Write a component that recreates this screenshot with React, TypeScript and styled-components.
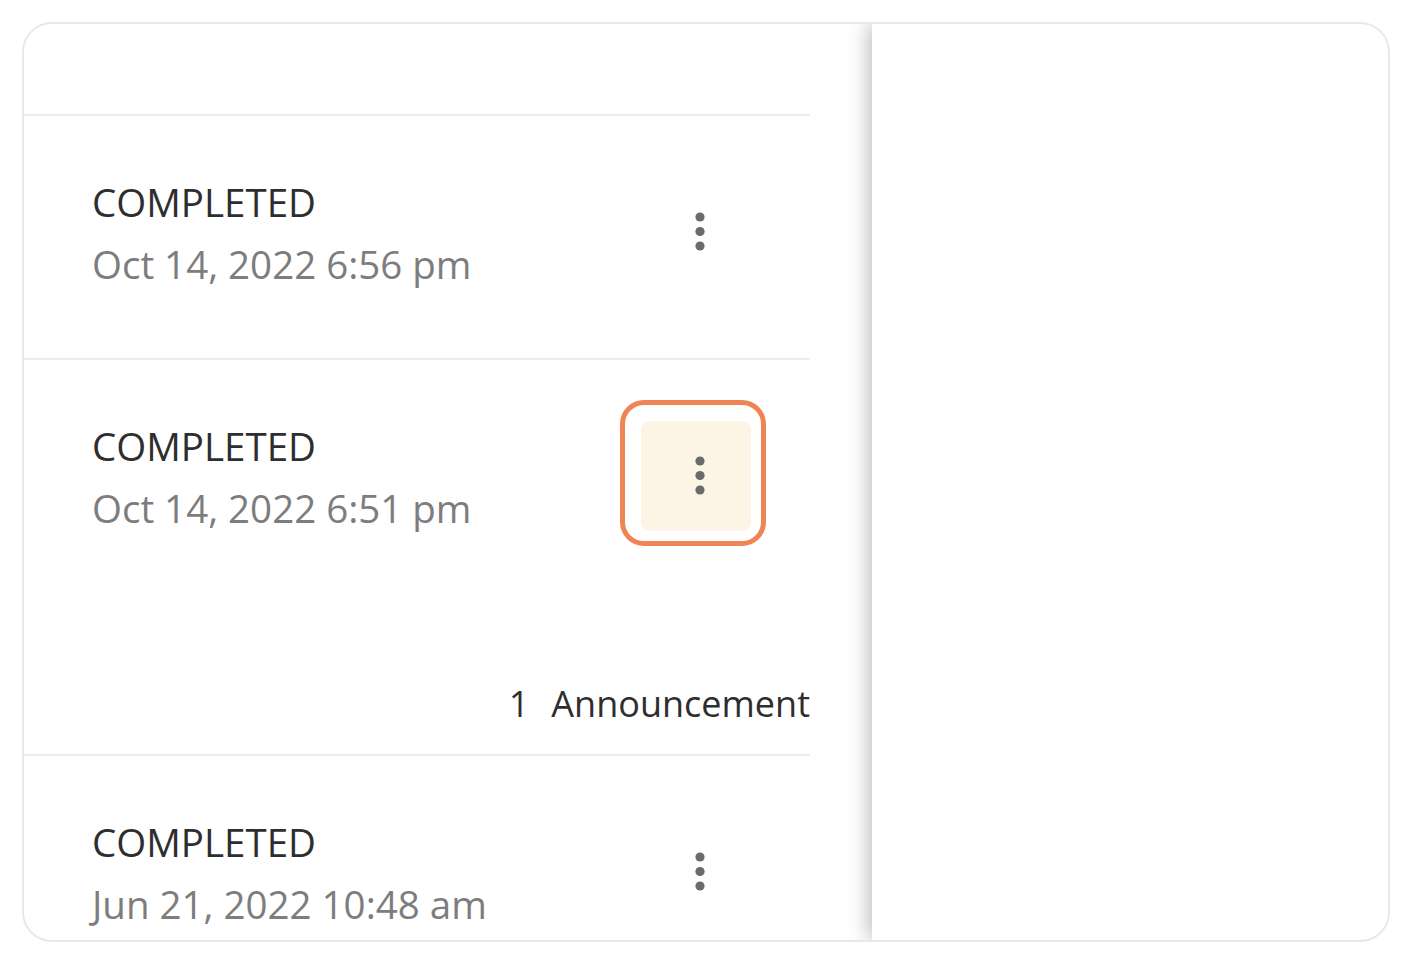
import React from "react";
import styled, { createGlobalStyle } from "styled-components";

type Session = {
  id: string;
  status: string;
  date: string;
  announcements?: number;
  focused?: boolean;
};

const sessions: Session[] = [
  { id: "a", status: "COMPLETED", date: "Oct 14, 2022 6:56 pm" },
  { id: "b", status: "COMPLETED", date: "Oct 14, 2022 6:51 pm", announcements: 1, focused: true },
  { id: "c", status: "COMPLETED", date: "Jun 21, 2022 10:48 am" },
];

const GlobalStyle = createGlobalStyle`
  html, body {
    margin: 0;
    padding: 0;
    background: #ffffff;
    font-family: "Open Sans", "Noto Sans", sans-serif;
  }
`;

const Page = styled.div`
  padding: 22px 22px 14px 22px;
  box-sizing: border-box;
  width: 1412px;
  height: 956px;
`;

const Card = styled.div`
  width: 1368px;
  height: 920px;
  box-sizing: border-box;
  border: 2px solid #e8e8ea;
  border-radius: 30px;
  overflow: hidden;
  display: flex;
  background: #fff;
`;

const ListPane = styled.div`
  width: 848px;
  flex-shrink: 0;
  padding-right: 62px;
  box-sizing: border-box;
  display: flex;
  flex-direction: column;
`;

const Header = styled.div`
  height: 90px;
  flex-shrink: 0;
  border-bottom: 2px solid #ededee;
`;

const Row = styled.div`
  border-bottom: 2px solid #ededee;
  padding: 55px 0 0 68px;
  flex-shrink: 0;
`;

const RowMain = styled.div<{ $bottom: number }>`
  display: flex;
  align-items: center;
  justify-content: space-between;
  padding-bottom: ${({ $bottom }) => $bottom}px;
`;

const TextBlock = styled.div`
  display: flex;
  flex-direction: column;
`;

const Status = styled.div`
  font-size: 38.5px;
  line-height: 62px;
  color: #2e2e2e;
`;

const DateText = styled.div`
  font-size: 38.5px;
  line-height: 62px;
  color: #7d7d7d;
`;

const MenuButton = styled.button<{ $focused?: boolean }>`
  position: relative;
  width: 110px;
  height: 110px;
  margin-right: 59px;
  margin-top: -3px;
  border: none;
  border-radius: 9px;
  background: ${({ $focused }) => ($focused ? "#fcf4e5" : "transparent")};
  display: flex;
  align-items: center;
  justify-content: center;
  padding: 0 0 0 7px;
  cursor: pointer;

  &::after {
    content: "";
    display: ${({ $focused }) => ($focused ? "block" : "none")};
    position: absolute;
    inset: -21px -15px -15px -21px;
    border: 5px solid #ef8555;
    border-radius: 24px;
  }
`;

const Footer = styled.div`
  display: flex;
  justify-content: flex-end;
  font-size: 36px;
  line-height: 62px;
  color: #2e2e2e;
  padding-bottom: 19px;
  gap: 22px;
`;

const DetailPane = styled.div`
  flex: 1;
  background: #fff;
  box-shadow: -3px 0 20px rgba(0, 0, 0, 0.28);
  position: relative;
`;

const Kebab = () => (
  <svg width="12" height="42" viewBox="0 0 12 42">
    <circle cx="6" cy="6" r="4.6" fill="#6b6b6b" />
    <circle cx="6" cy="20.5" r="4.6" fill="#6b6b6b" />
    <circle cx="6" cy="35" r="4.6" fill="#6b6b6b" />
  </svg>
);

const SessionRow = ({ status, date, announcements, focused }: Session) => (
  <Row>
    <RowMain $bottom={announcements ? 134 : 63}>
      <TextBlock>
        <Status>{status}</Status>
        <DateText>{date}</DateText>
      </TextBlock>
      <MenuButton $focused={focused} aria-label="More options">
        <Kebab />
      </MenuButton>
    </RowMain>
    {announcements ? (
      <Footer>
        <span>{announcements}</span>
        <span>Announcement</span>
      </Footer>
    ) : null}
  </Row>
);

export default function App() {
  return (
    <>
      <GlobalStyle />
      <Page>
        <Card>
          <ListPane>
            <Header />
            {sessions.map((s) => (
              <SessionRow key={s.id} {...s} />
            ))}
          </ListPane>
          <DetailPane />
        </Card>
      </Page>
    </>
  );
}
